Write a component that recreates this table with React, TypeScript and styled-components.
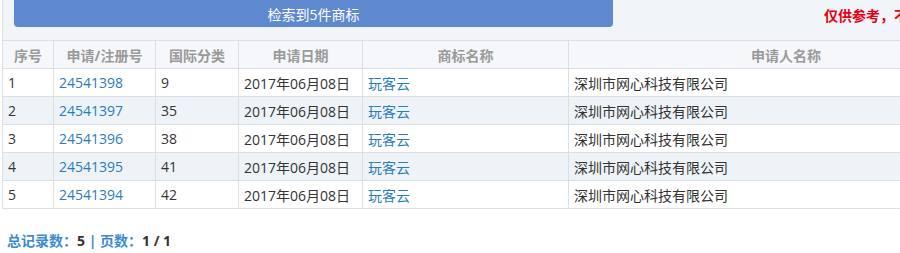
import React from "react";
import styled, { createGlobalStyle } from "styled-components";

const GlobalStyle = createGlobalStyle`
	body {
		margin: 0;
		background: #fff;
		font-family: "Open Sans", "Noto Sans CJK SC", "Microsoft YaHei", sans-serif;
		overflow: hidden;
	}
`;

const Page = styled.div`
	width: 1010px;
	padding-left: 2px;
	box-sizing: border-box;
`;

const Toolbar = styled.div`
	height: 40px;
	display: flex;
	align-items: flex-start;
	padding-left: 11px;
	background: #f1f4f9;
	border-left: 1px solid #dfe3e8;
	box-sizing: border-box;
`;

const ResultButton = styled.div`
	width: 599px;
	height: 27px;
	display: flex;
	align-items: center;
	justify-content: center;
	background: #5f89cf;
	color: #fff;
	font-size: 14px;
	border-radius: 0 0 4px 4px;
`;

const Notice = styled.div`
	margin-left: 211px;
	height: 30px;
	display: flex;
	align-items: center;
	color: #e60012;
	font-size: 14px;
	font-weight: bold;
	white-space: nowrap;
`;

const Table = styled.table`
	width: 1002px;
	border-collapse: collapse;
	table-layout: fixed;
	font-size: 14px;
`;

const HeadCell = styled.th<{ $w?: number }>`
	width: ${(p) => (p.$w ? `${p.$w}px` : "auto")};
	height: 27px;
	padding: 0;
	border: 1px solid #dcdfe3;
	background: #f5f7fa;
	color: #9a9a9a;
	font-weight: bold;
	text-align: center;
`;

const Row = styled.tr<{ $alt: boolean }>`
	background: ${(p) => (p.$alt ? "#eef3f8" : "#fff")};
`;

const Cell = styled.td`
	height: 27px;
	padding: 0 0 0 5px;
	border: 1px solid #dcdfe3;
	color: #333;
	white-space: nowrap;
`;

const Link = styled.span`
	color: #2a7bbf;
`;

const Footer = styled.div`
	padding: 21px 0 0 5px;
	font-size: 14px;
	font-weight: bold;
	color: #3d8ad0;
`;

const Strong = styled.span`
	color: #333;
`;

const rows = [
	{ no: "24541398", cls: "9" },
	{ no: "24541397", cls: "35" },
	{ no: "24541396", cls: "38" },
	{ no: "24541395", cls: "41" },
	{ no: "24541394", cls: "42" },
];

const App = () => {
	return (
		<Page>
			<GlobalStyle />
			<Toolbar>
				<ResultButton>检索到5件商标</ResultButton>
				<Notice>仅供参考，不具有法律效力</Notice>
			</Toolbar>

			<Table>
				<thead>
					<tr>
						<HeadCell $w={50}>序号</HeadCell>
						<HeadCell $w={101}>申请/注册号</HeadCell>
						<HeadCell $w={82}>国际分类</HeadCell>
						<HeadCell $w={123}>申请日期</HeadCell>
						<HeadCell $w={205}>商标名称</HeadCell>
						<HeadCell>申请人名称</HeadCell>
					</tr>
				</thead>
				<tbody>
					{rows.map((r, i) => (
						<Row key={r.no} $alt={i % 2 === 1}>
							<Cell>{i + 1}</Cell>
							<Cell>
								<Link>{r.no}</Link>
							</Cell>
							<Cell>{r.cls}</Cell>
							<Cell>2017年06月08日</Cell>
							<Cell>
								<Link>玩客云</Link>
							</Cell>
							<Cell>深圳市网心科技有限公司</Cell>
						</Row>
					))}
				</tbody>
			</Table>

			<Footer>
				总记录数：<Strong>5</Strong> | 页数：<Strong>1 / 1</Strong>
			</Footer>
		</Page>
	);
};

export default App;
